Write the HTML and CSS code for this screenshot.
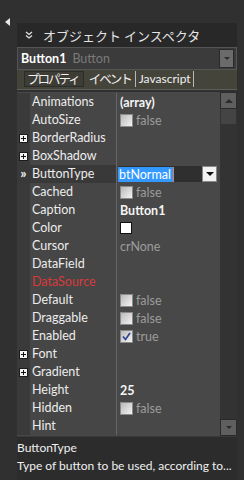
FILE: index.html
```html
<!DOCTYPE html>
<html lang="ja">
<head>
    <meta charset="UTF-8">
    <title>Object Inspector</title>
    <link rel="stylesheet" href="styles.css">
</head>
<body>
    <div class="dock">
        <div class="side">
            <span class="collapse"></span>
        </div>
        <div class="panel">
            <div class="title">
                <svg class="chev" width="8" height="8" viewBox="0 0 8 8">
                    <path d="M1 1 L4 3.5 L7 1 M1 4.5 L4 7 L7 4.5" fill="none" stroke="#e0e0e0" stroke-width="1.3"/>
                </svg>
                <span>オブジェクト インスペクタ</span>
            </div>

            <div class="combo">
                <span class="combo-name">Button1</span>
                <span class="combo-type">Button</span>
                <span class="combo-btn"><i class="tri-small"></i></span>
            </div>

            <div class="tabs">
                <span class="tab active">プロパティ</span>
                <span class="tab">イベント</span>
                <span class="tab latin">Javascript</span>
            </div>

            <div class="grid">
                <div class="props" id="props">
                    <!-- rows filled by script -->
                </div>
                <div class="scroll">
                    <span class="sbtn"><i class="tri-up"></i></span>
                    <span class="thumb"></span>
                    <span class="track"></span>
                    <span class="sbtn"><i class="tri-small"></i></span>
                </div>
            </div>

            <div class="desc">
                <div>ButtonType</div>
                <div>Type of button to be used, according to...</div>
            </div>
        </div>
    </div>

    <script>
        const rows = [
            { name: "Animations", value: "(array)", kind: "bold" },
            { name: "AutoSize", value: "false", kind: "check" },
            { name: "BorderRadius", expand: true },
            { name: "BoxShadow", expand: true },
            { name: "ButtonType", value: "btNormal", kind: "edit", selected: true },
            { name: "Cached", value: "false", kind: "check" },
            { name: "Caption", value: "Button1", kind: "bold" },
            { name: "Color", kind: "color" },
            { name: "Cursor", value: "crNone", kind: "plain" },
            { name: "DataField" },
            { name: "DataSource", red: true },
            { name: "Default", value: "false", kind: "check" },
            { name: "Draggable", value: "false", kind: "check" },
            { name: "Enabled", value: "true", kind: "check", checked: true },
            { name: "Font", expand: true },
            { name: "Gradient", expand: true },
            { name: "Height", value: "25", kind: "bold" },
            { name: "Hidden", value: "false", kind: "check" },
            { name: "Hint" }
        ];

        const props = document.getElementById('props');

        function valueHtml(row) {
            if (row.kind === 'bold') return `<span class="v-bold">${row.value}</span>`;
            if (row.kind === 'plain') return `<span class="v-dim">${row.value}</span>`;
            if (row.kind === 'color') return `<span class="swatch"></span>`;
            if (row.kind === 'check') {
                const mark = row.checked
                    ? `<svg width="9" height="9" viewBox="0 0 9 9"><path d="M1 4.5 L3.5 7.5 L8 1" fill="none" stroke="#2a3f8f" stroke-width="1.6"/></svg>`
                    : '';
                return `<span class="check">${mark}</span><span class="v-dim">${row.value}</span>`;
            }
            if (row.kind === 'edit') {
                return `<span class="edit"><span class="sel">${row.value}</span></span><span class="drop"><i class="tri"></i></span>`;
            }
            return '';
        }

        rows.forEach(row => {
            const el = document.createElement('div');
            el.className = 'row' + (row.selected ? ' selected' : '');
            let gutter = '';
            if (row.expand) gutter = '<span class="plus"></span>';
            if (row.selected) gutter = '<span class="marker">»</span>';
            el.innerHTML = `
                <span class="gutter">${gutter}</span>
                <span class="name${row.red ? ' red' : ''}">${row.name}</span>
                <span class="value">${valueHtml(row)}</span>
            `;
            props.appendChild(el);
        });
    </script>
</body>
</html>
```

FILE: styles.css
```css
body {
    margin: 0;
    background-color: #303030;
    font-family: Lato, 'Open Sans', 'Noto Sans CJK JP', sans-serif;
    font-size: 12.5px;
    color: #e6e6e6;
}
.dock {
    display: flex;
    align-items: flex-start;
    width: 244px;
    height: 480px;
    overflow: hidden;
}
.side {
    width: 17px;
    flex-shrink: 0;
    padding-top: 18px;
    box-sizing: border-box;
}
.collapse {
    display: block;
    margin-left: 5px;
    width: 0;
    height: 0;
    border-top: 4px solid transparent;
    border-bottom: 4px solid transparent;
    border-right: 5px solid #e8e8e8;
}
.panel {
    width: 220px;
    flex-shrink: 0;
    margin-top: 23px;
    display: flex;
    flex-direction: column;
}
.panel > * {
    flex-shrink: 0;
}
.title {
    height: 24px;
    background-color: #282828;
    display: flex;
    align-items: center;
    gap: 10px;
    padding-left: 8px;
    font-family: 'Noto Sans CJK JP', sans-serif;
    font-size: 13px;
    color: #e4e4e4;
}
.combo {
    height: 23px;
    box-sizing: border-box;
    border: 1px solid #555;
    background-color: #3b3b3b;
    display: flex;
    align-items: center;
    padding-left: 3px;
    gap: 6px;
}
.combo-name {
    font-weight: bold;
    color: #fff;
}
.combo-type {
    color: #7a7a7a;
    flex: 1;
}
.combo-btn {
    width: 15px;
    height: 19px;
    box-sizing: border-box;
    border: 1px solid #2a2a2a;
    background-color: #6b6b6b;
    display: flex;
    align-items: center;
    justify-content: center;
    margin-right: 2px;
}
.tri-small {
    display: block;
    width: 0;
    height: 0;
    border-left: 3px solid transparent;
    border-right: 3px solid transparent;
    border-top: 3px solid #2c2c2c;
}
.tri-up {
    display: block;
    width: 0;
    height: 0;
    border-left: 4px solid transparent;
    border-right: 4px solid transparent;
    border-bottom: 4px solid #2c2c2c;
}
.tabs {
    height: 20px;
    background-color: #45443b;
    display: flex;
    align-items: stretch;
    padding: 1px 0 2px 7px;
    box-sizing: border-box;
    border-bottom: 1px solid #5e5e5e;
    font-family: 'Noto Sans CJK JP', sans-serif;
    font-size: 12.5px;
    letter-spacing: -2px;
}
.tab {
    display: flex;
    align-items: center;
    padding: 0 4px 0 2px;
    border-right: 1px solid #b8b8b8;
    margin-right: 3px;
    line-height: 1;
    color: #f0f0f0;
}
.tab.latin {
    font-family: Lato, sans-serif;
    font-size: 12px;
    letter-spacing: 0;
    padding: 0 2px 0 0;
}
.tab.active {
    border: 1px solid #2c2c2c;
    background-color: #3d3c35;
    margin-right: 3px;
}
.grid {
    display: flex;
    height: 344px;
    margin-top: 2px;
}
.props {
    flex: 1;
    background-color: #484848;
    padding-top: 1px;
}
.row {
    display: grid;
    grid-template-columns: 13px 87px 1fr;
    height: 18px;
    align-items: center;
}
.gutter {
    height: 18px;
    background-color: #3a3a3a;
    display: flex;
    align-items: center;
    justify-content: center;
}
.name {
    height: 18px;
    line-height: 18px;
    padding-left: 2px;
    background-color: #464646;
    border-right: 1px solid #666;
    color: #ececec;
}
.name.red {
    color: #d83a3a;
}
.row.selected .name,
.row.selected .gutter {
    background-color: #393939;
}
.value {
    height: 18px;
    display: flex;
    align-items: center;
    padding-left: 3px;
    gap: 3px;
}
.v-bold {
    font-weight: bold;
    color: #f4f4f4;
}
.v-dim {
    color: #9c9c9c;
}
.plus {
    width: 9px;
    height: 9px;
    box-sizing: border-box;
    border: 1px solid #1c1c1c;
    background:
        linear-gradient(#111, #111) center / 5px 1px no-repeat,
        linear-gradient(#111, #111) center / 1px 5px no-repeat,
        #f2f2f2;
}
.marker {
    font-size: 14px;
    line-height: 1;
    color: #f2f2f2;
    font-weight: bold;
    margin-top: -2px;
}
.check {
    width: 13px;
    height: 13px;
    box-sizing: border-box;
    border: 1px solid #8a8a8a;
    background: linear-gradient(135deg, #b9b9b9, #f4f4f4);
    display: flex;
    align-items: center;
    justify-content: center;
}
.swatch {
    width: 12px;
    height: 12px;
    box-sizing: border-box;
    border: 1px solid #111;
    background-color: #fff;
}
.edit {
    width: 84px;
    height: 16px;
    background-color: #2f2f2f;
    display: flex;
    align-items: center;
    margin-left: -2px;
}
.sel {
    background-color: #3399ff;
    color: #fff;
    padding: 0 2px 0 1px;
    line-height: 15px;
    border-right: 1px solid #e08040;
}
.drop {
    width: 15px;
    height: 16px;
    box-sizing: border-box;
    border: 1px solid #888;
    background-color: #f2f2f2;
    display: flex;
    align-items: center;
    justify-content: center;
    margin-left: -3px;
}
.tri {
    display: block;
    width: 0;
    height: 0;
    border-left: 4px solid transparent;
    border-right: 4px solid transparent;
    border-top: 4px solid #111;
}
.scroll {
    width: 17px;
    background-color: #333;
    display: flex;
    flex-direction: column;
    align-items: center;
}
.sbtn {
    width: 17px;
    height: 17px;
    box-sizing: border-box;
    border: 1px solid #2a2a2a;
    background-color: #5f5f5f;
    display: flex;
    align-items: center;
    justify-content: center;
}
.thumb {
    width: 15px;
    height: 15px;
    background-color: #444;
}
.track {
    flex: 1;
}
.desc {
    height: 44px;
    background-color: #2c2c2c;
    border-top: 1px solid #3a3a3a;
    padding-top: 2px;
    font-size: 12px;
    line-height: 18px;
    color: #f0f0f0;
    white-space: nowrap;
    overflow: hidden;
}
```
